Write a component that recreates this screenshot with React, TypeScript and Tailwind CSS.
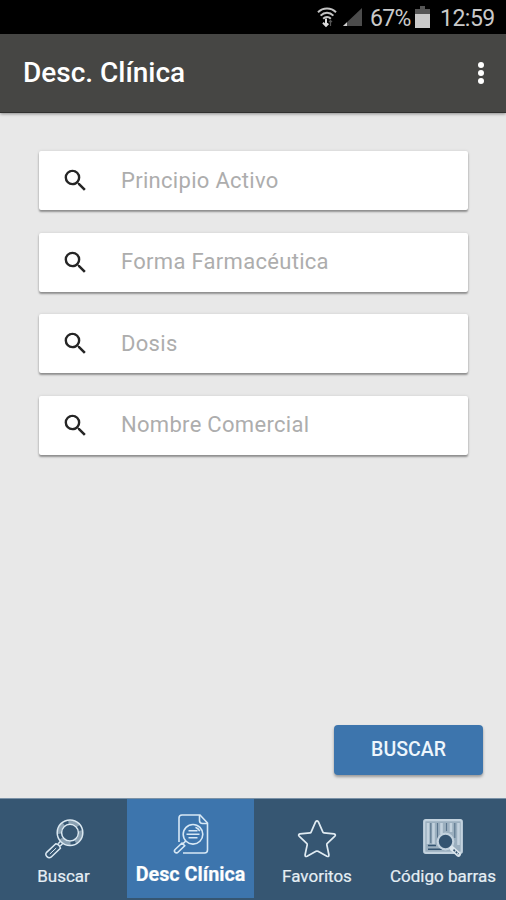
import * as React from "react";

const fields = ["Principio Activo", "Forma Farmacéutica", "Dosis", "Nombre Comercial"];

/** Wifi, signal and battery indicators with the clock */
function StatusBar() {
  return (
    <div className="flex h-[34px] shrink-0 items-center justify-end bg-black pr-[11px] text-[#c9c9c9]">
      <svg className="h-[22px] w-5" viewBox="0 0 20 22" fill="none" stroke="#c4c4c4" strokeWidth="2">
        <path d="M1 6.2C6 1.2 14 1.2 19 6.2M3.6 9.6C7.4 5.8 12.6 5.8 16.4 9.6M6.2 12.8C8.5 10.4 11.5 10.4 13.8 12.8" />
        <path d="M9 12.5v7M6 16.8 9 19.8l2.3-2.3" stroke="#dedede" />
        <path d="M13.5 20v-5.5M12 16.2l1.5-1.8 1.5 1.8" stroke="#555" strokeWidth="1.2" />
      </svg>
      <svg className="ml-[6px] h-[18px] w-[19px]" viewBox="0 0 19 18">
        <path d="M19 0v18H0z" fill="#4c4c4c" />
        <path d="M4 14.2V18H0z" fill="#d0d0d0" />
      </svg>
      <span className="ml-2 w-[43px] whitespace-nowrap pt-[3px] text-[23px] leading-8 tracking-[-0.7px]">67%</span>
      <svg className="ml-[2px] h-[22px] w-[15px]" viewBox="0 0 15 22">
        <path d="M5 0h5v3h5v5H0V3h5z" fill="#555" />
        <path d="M0 8h15v14H0z" fill="#cacaca" />
      </svg>
      <span className="ml-[10px] w-[55px] whitespace-nowrap pt-[3px] text-[23px] leading-8 tracking-[-0.5px]">12:59</span>
    </div>
  );
}

function SearchField({ label }: { label: string }) {
  return (
    <label className="flex h-[59px] items-center rounded-[2px] bg-white pl-[22px] shadow-[0_2px_2px_rgba(0,0,0,0.36),0_0_3px_rgba(0,0,0,0.12)]">
      <svg className="h-[29px] w-[29px] shrink-0" viewBox="0 0 24 24" fill="#252525">
        <path d="M15.5 14h-.79l-.28-.27A6.47 6.47 0 0 0 16 9.5 6.5 6.5 0 1 0 9.5 16c1.61 0 3.09-.59 4.23-1.57l.27.28v.79l5 4.99L20.49 19l-4.99-5zm-6 0C7.01 14 5 11.99 5 9.5S7.01 5 9.5 5 14 7.01 14 9.5 11.99 14 9.5 14z" />
      </svg>
      <span className="ml-[31px] whitespace-nowrap pb-px text-[22px] tracking-[0.3px] text-[#adadad]">{label}</span>
    </label>
  );
}

function MagnifierIcon() {
  return (
    <svg className="h-10 w-10" viewBox="0 0 40 40" fill="none" stroke="#dce9f2" strokeWidth="1.5">
      <circle cx="26" cy="13.7" r="12.8" />
      <circle cx="26" cy="13.7" r="8.4" />
      <circle cx="26" cy="13.7" r="10.6" strokeDasharray="11 5" strokeWidth="3.4" opacity=".5" />
      <path d="m16.5 22.3-2.3 2.5M18.7 24.5l-2.5 2.6" />
      <path d="M11.8 24.8q3.6.6 4.6 4.4L7 38.2q-2 1.4-4-.6t-.6-4z" />
      <path d="m12.2 29-6.4 6" strokeWidth="1" />
    </svg>
  );
}

function DocumentIcon() {
  return (
    <svg className="h-10 w-9" viewBox="0 0 36 40" fill="none" stroke="#d7e8f5" strokeWidth="1.6">
      <path d="M6 28V4a3 3 0 0 1 3-3h18l7.5 8v27a3 3 0 0 1-3 3H10" />
      <path d="M26.5 1v5.5A3 3 0 0 0 29.5 9.5h5" />
      <circle cx="20" cy="20.3" r="9.8" />
      <path d="M15.5 16.8h9M13.5 20.3h13M15.5 23.8h9M22.5 13.2a8 8 0 0 1 4.3 4" />
      <path d="m12.8 27-2.5 2.4M9 29l2.7 2.7-6.7 6.6a2 2 0 0 1-2.9-2.8z" />
    </svg>
  );
}

function StarIcon() {
  return (
    <svg className="h-10 w-10" viewBox="-1 -1 42 42" fill="none" stroke="#e0ebf2" strokeWidth="1.8" strokeLinejoin="round">
      <path d="M18.5 2.1q1.5-2.3 3 0l4.7 10.6q.3.7 1.1.8l10.6 1.2q2.2.5.9 2.2l-8 7.6q-.7.7-.5 1.6l2.2 10.4q.2 2.6-2.1 1.6l-9.4-5.2q-1-.5-2 0l-9.4 5.2q-2.3 1-2.1-1.6l2.2-10.4q.2-.9-.5-1.6l-8-7.6q-1.3-1.7.9-2.2l10.6-1.2q.8-.1 1.1-.8z" />
    </svg>
  );
}

function BarcodeIcon() {
  return (
    <svg className="h-10 w-10" viewBox="0 0 40 40" fill="none" stroke="#c3d2de">
      <rect x="1.2" y="1.2" width="37.6" height="32.6" rx="1.5" fill="#9bafbf" strokeWidth="2.2" />
      <path d="M5 4v21M10.5 4v21M18.5 4v11M28 4v9M35.5 4v22" strokeWidth="2.6" />
      <path d="M7.8 4v20M14.5 4v17M23.5 4v8M31.8 4v15" stroke="#5b758d" strokeWidth="1.1" />
      <path d="M5 26.5h8M5 30.3h14" stroke="#345471" strokeWidth="1.4" />
      <circle cx="22.5" cy="22.5" r="7.8" fill="#345471" strokeWidth="2.2" />
      <path d="m29 29.5 6.5 5.8" stroke="#dbe5ec" strokeWidth="5" strokeLinecap="round" />
      <path d="m30.5 30.7 5 4.5" stroke="#345471" strokeWidth="1.6" strokeDasharray="2 1" />
    </svg>
  );
}

function BottomNav() {
  return (
    <nav className="grid h-[102px] shrink-0 grid-cols-[127px_127px_126px_126px] border-t border-[#7b92a7] bg-[#365672] text-[17px] text-[#e5eef4] [-webkit-text-stroke:0.2px_#e5eef4]">
      <div className="flex flex-col items-center pt-5">
        <MagnifierIcon />
        <span className="mt-[5px] whitespace-nowrap leading-6">Buscar</span>
      </div>
      <div className="mb-[2px] flex flex-col items-center bg-[#3d75ad] pt-[15px] text-white">
        <DocumentIcon />
        <span className="mt-[9px] whitespace-nowrap text-[19.8px] font-bold leading-6">Desc Clínica</span>
      </div>
      <div className="flex flex-col items-center pt-5">
        <StarIcon />
        <span className="mt-[5px] whitespace-nowrap leading-6">Favoritos</span>
      </div>
      <div className="flex flex-col items-center pt-5">
        <BarcodeIcon />
        <span className="mt-[5px] whitespace-nowrap leading-6">Código barras</span>
      </div>
    </nav>
  );
}

export default function App() {
  return (
    <div className="flex h-[900px] w-[506px] flex-col overflow-hidden bg-[#e8e8e8] font-['Roboto',sans-serif]">
      <StatusBar />
      <header className="z-10 flex h-[79px] shrink-0 items-center justify-between border-b border-[#30302f] bg-[#464644] pl-[23px] pr-[22px] shadow-[0_1px_3px_rgba(0,0,0,0.4)]">
        <h1 className="text-[28px] font-medium text-white">Desc. Clínica</h1>
        <svg className="h-6 w-[6px]" viewBox="0 0 6 24" fill="#fff">
          <circle cx="3" cy="4" r="3" />
          <circle cx="3" cy="12" r="3" />
          <circle cx="3" cy="20" r="3" />
        </svg>
      </header>
      <main className="flex flex-1 flex-col px-[39px] pt-[38px]">
        <div className="mr-[-1px] flex flex-col gap-[22.6px]">
          {fields.map((label) => (
            <SearchField key={label} label={label} />
          ))}
        </div>
        <button className="mb-[23px] mr-[-16px] mt-auto h-[50px] w-[149px] self-end rounded-[4px] bg-[#3d75ad] text-[19.5px] font-medium text-[#eef6fc] shadow-[0_2px_3px_rgba(0,0,0,0.35)]">
          BUSCAR
        </button>
      </main>
      <BottomNav />
    </div>
  );
}
